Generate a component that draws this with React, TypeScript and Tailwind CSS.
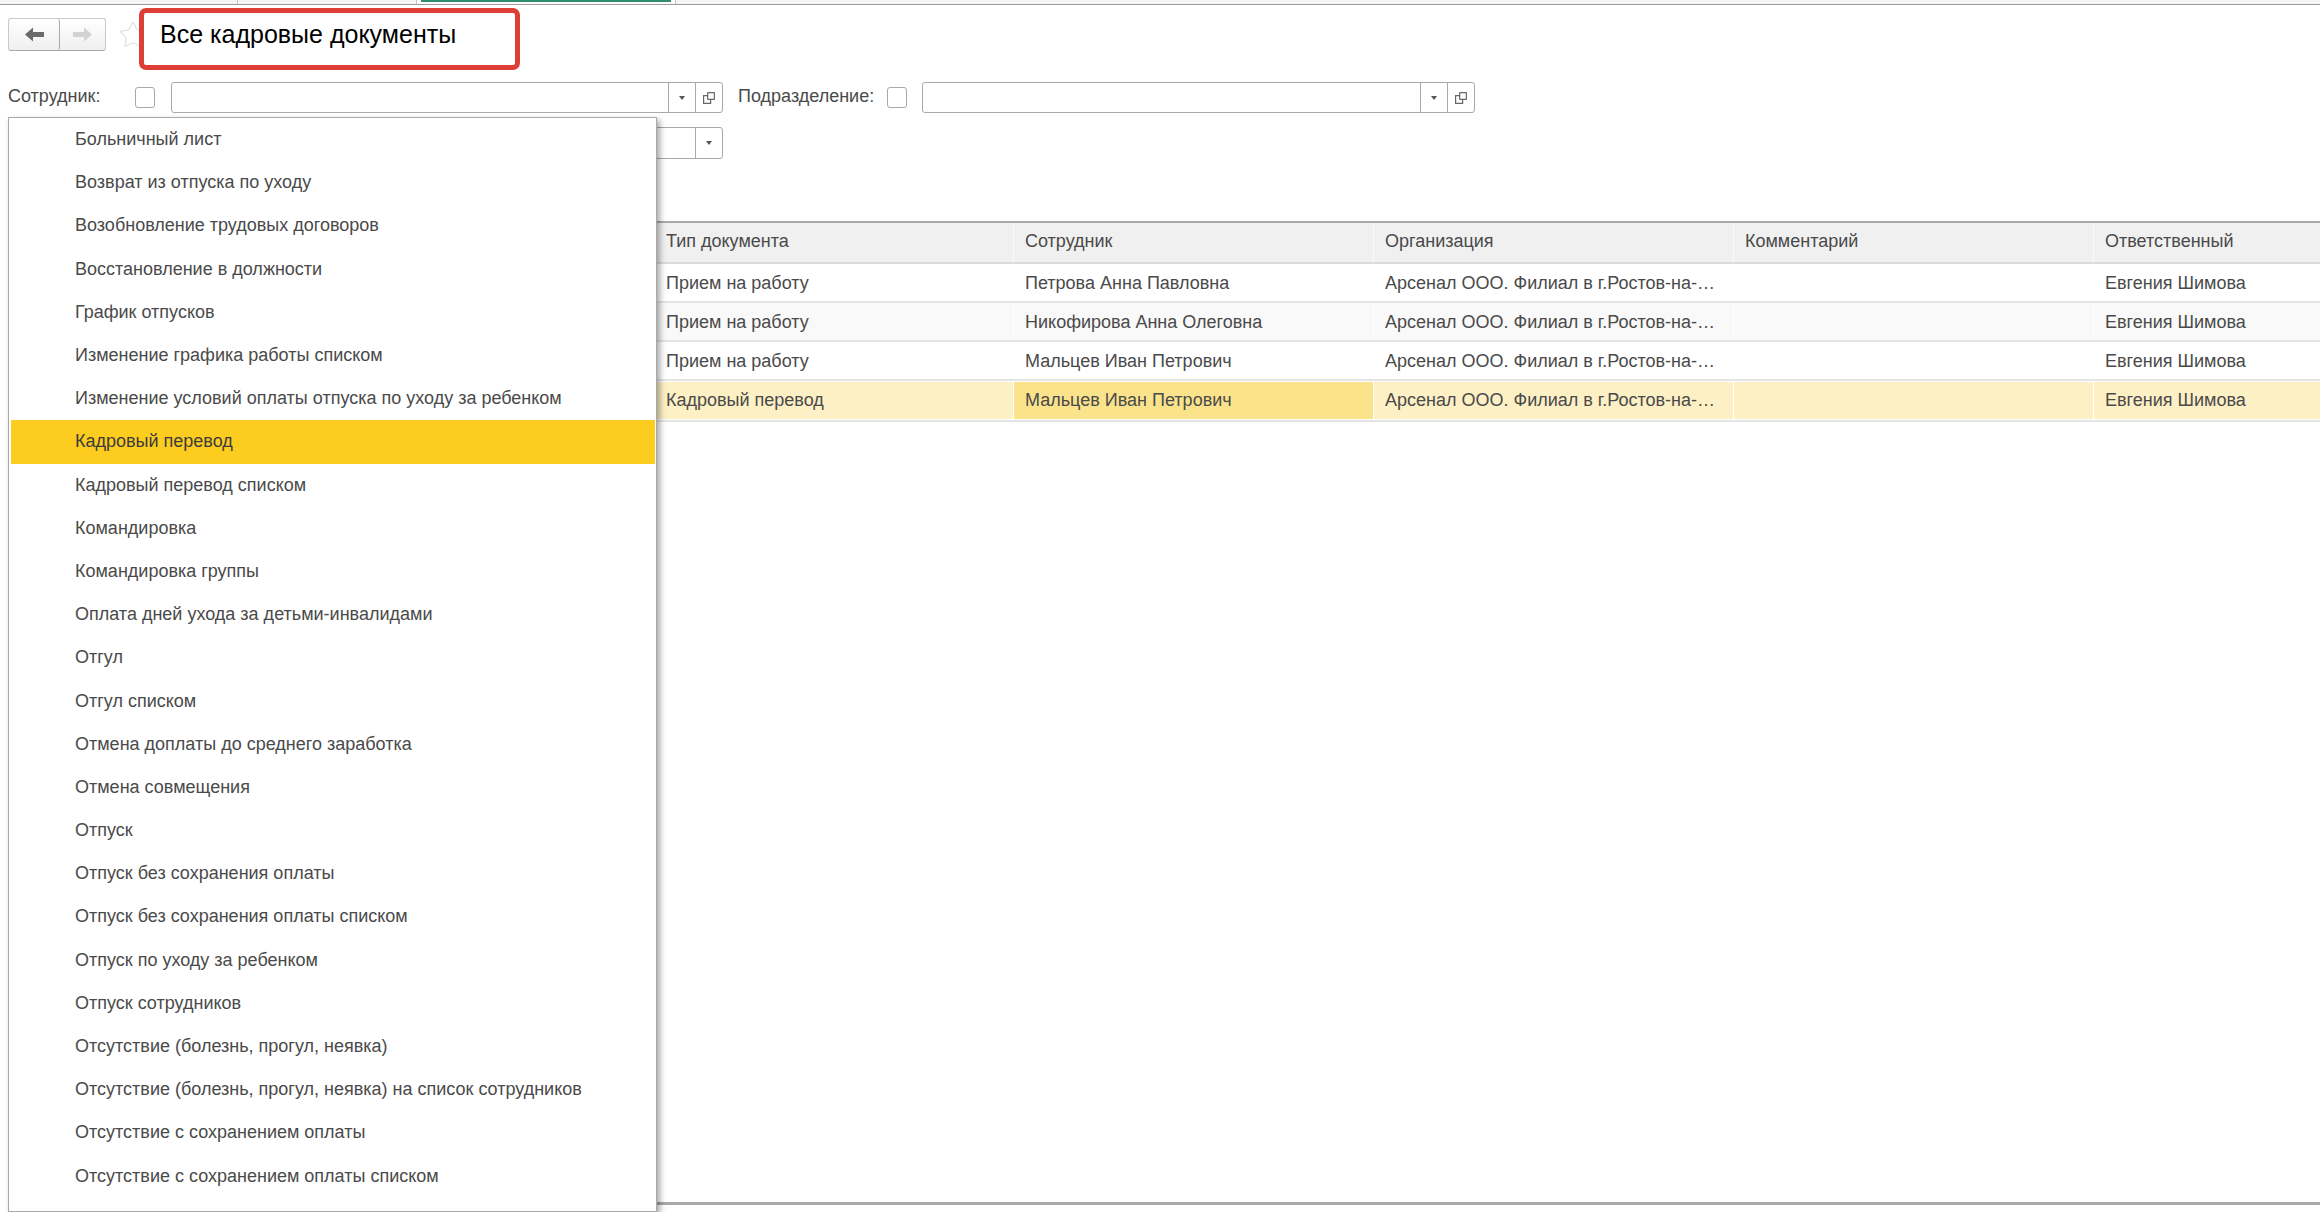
import React from "react";
import { Star } from "lucide-react";

const menuItems = [
  "Больничный лист",
  "Возврат из отпуска по уходу",
  "Возобновление трудовых договоров",
  "Восстановление в должности",
  "График отпусков",
  "Изменение графика работы списком",
  "Изменение условий оплаты отпуска по уходу за ребенком",
  "Кадровый перевод",
  "Кадровый перевод списком",
  "Командировка",
  "Командировка группы",
  "Оплата дней ухода за детьми-инвалидами",
  "Отгул",
  "Отгул списком",
  "Отмена доплаты до среднего заработка",
  "Отмена совмещения",
  "Отпуск",
  "Отпуск без сохранения оплаты",
  "Отпуск без сохранения оплаты списком",
  "Отпуск по уходу за ребенком",
  "Отпуск сотрудников",
  "Отсутствие (болезнь, прогул, неявка)",
  "Отсутствие (болезнь, прогул, неявка) на список сотрудников",
  "Отсутствие с сохранением оплаты",
  "Отсутствие с сохранением оплаты списком",
];

const org = "Арсенал ООО. Филиал в г.Ростов-на-Дону";
const person = "Евгения Шимова";

const rows = [
  { type: "Прием на работу", employee: "Петрова Анна Павловна" },
  { type: "Прием на работу", employee: "Никофирова Анна Олеговна" },
  { type: "Прием на работу", employee: "Мальцев Иван Петрович" },
  { type: "Кадровый перевод", employee: "Мальцев Иван Петрович" },
];

const gridCols = "grid grid-cols-[646px_359px_360px_360px_360px_1fr]";

const Arrow = ({ flip, color }: { flip?: boolean; color: string }) => (
  <svg width="19" height="15" viewBox="0 0 19 15" className={flip ? "-scale-x-100" : ""}>
    <path d="M0 7.5 L8 0.5 V5 H19 V10 H8 V14.5 Z" fill={color} />
  </svg>
);

const Caret = () => (
  <svg width="6" height="4" viewBox="0 0 6 4">
    <path d="M0 0 H6 L3 4 Z" fill="#555555" />
  </svg>
);

const OpenIcon = () => (
  <svg width="12" height="12" viewBox="0 0 12 12" fill="none" stroke="#666666" strokeWidth="1.2">
    <rect x="4.6" y="0.6" width="6.8" height="6.8" rx="0.5" />
    <path d="M4.6 3.6 H0.6 V11.4 H7.6 V7.4" />
  </svg>
);

const Field = ({ className, open }: { className: string; open?: boolean }) => (
  <div className={`flex rounded-[3px] border border-[#a9a9a9] bg-white ${className}`}>
    <div className="flex-1" />
    <div className="flex w-[27px] items-center justify-center border-l border-[#a9a9a9]">
      <Caret />
    </div>
    {open && (
      <div className="flex w-[27px] items-center justify-center border-l border-[#a9a9a9]">
        <OpenIcon />
      </div>
    )}
  </div>
);

const Checkbox = () => (
  <div className="h-[21px] w-[20px] shrink-0 rounded-[3px] border border-[#a9a9a9] bg-white" />
);

const TabStrip = () => (
  <div className="flex h-[5px] border-b border-[#9a9a9a] bg-[#f4f4f4]">
    <div className="w-[238px] border-r border-[#c4c4c4]" />
    <div className="w-[179px] border-r border-[#c4c4c4]" />
    <div className="w-[259px] border-r border-[#c4c4c4] bg-white pl-[4px]">
      <div className="h-[2px] w-[250px] bg-[#2f8f6b]" />
    </div>
  </div>
);

const Header = () => (
  <div className="flex h-[77px] pl-[8px]">
    <div className="mt-[13px] flex h-[33px] w-[98px] rounded-[3px] border border-[#c9c9c9] border-b-[#a9a9a9] bg-gradient-to-b from-white to-[#efefef]">
      <div className="flex w-[51px] items-center justify-center rounded-[3px] border-r border-[#a9a9a9]">
        <Arrow color="#6a6a6a" />
      </div>
      <div className="flex flex-1 items-center justify-center">
        <Arrow flip color="#d2d2d2" />
      </div>
    </div>
    <Star size={30} strokeWidth={1} className="mt-[15px] ml-[12px] text-[#e2e2e2]" />
    <div className="relative mt-[3px] -ml-[9px] h-[62px] w-[381px] rounded-[7px] border-[5px] border-[#dd3f36] bg-white pl-[16px] text-[25px] leading-[43px] text-black">
      Все кадровые документы
    </div>
  </div>
);

const Filters = () => (
  <div className="h-[139px] pl-[8px] text-[18px] text-[#4a4a4a]">
    <div className="flex h-[31px] items-center">
      <span className="w-[127px] -translate-y-[1px]">Сотрудник:</span>
      <Checkbox />
      <Field open className="ml-[16px] h-full w-[552px]" />
      <span className="ml-[15px] w-[149px] -translate-y-[1px]">Подразделение:</span>
      <Checkbox />
      <Field open className="ml-[15px] h-full w-[553px]" />
    </div>
    <Field className="mt-[14px] ml-[163px] h-[32px] w-[552px]" />
  </div>
);

const DocTable = () => (
  <div className="ml-[8px] flex h-[984px] flex-col border-t-2 border-b-[3px] border-[#a9a9a9] text-[18px] text-[#4a4a4a]">
    <div className={`${gridCols} h-[41px] border-b-2 border-[#dcdcdc] bg-[#f0f0f0]`}>
      {["", "Тип документа", "Сотрудник", "Организация", "Комментарий", "Ответственный"].map((title, i) => (
        <div
          key={i}
          className={`flex items-center pb-[2px] ${i === 1 ? "pl-[12px]" : "border-l border-[#fafafa] pl-[11px]"}`}
        >
          {title}
        </div>
      ))}
    </div>
    {rows.map((row, i) => {
      const selected = i === 3;
      return (
        <div
          key={i}
          className={`${gridCols} border-b-2 border-[#e4e4e4] ${
            selected ? "h-[41px] pt-[1px] pb-[1px]" : "h-[39px] pt-[1px]"
          } ${i === 1 ? "bg-[#f9f9f9]" : "bg-white"}`}
        >
          <div />
          <div className={`flex items-center pl-[12px] ${selected ? "bg-[#fdf0c5]" : ""}`}>{row.type}</div>
          <div className={`flex items-center border-l border-white pl-[11px] ${selected ? "bg-[#fbe38b]" : ""}`}>
            {row.employee}
          </div>
          <div className={`flex min-w-0 items-center border-l border-white pr-[11px] pl-[11px] ${selected ? "bg-[#fdf0c5]" : ""}`}>
            <span className="truncate">{org}</span>
          </div>
          <div className={`border-l border-white ${selected ? "bg-[#fdf0c5]" : ""}`} />
          <div className={`flex items-center border-l border-white pl-[11px] ${selected ? "bg-[#fdf0c5]" : ""}`}>
            {person}
          </div>
        </div>
      );
    })}
  </div>
);

const TypeMenu = () => (
  <div className="absolute top-[117px] bottom-0 left-[8px] w-[649px] overflow-hidden border border-[#a9a9a9] bg-white pr-[1px] pl-[2px] text-[18px] text-[#4a4a4a] shadow-[3px_3px_6px_rgba(0,0,0,0.35)]">
    {menuItems.map((item, i) => (
      <div
        key={item}
        className={`flex h-[43.2px] items-center pl-[64px] ${i === 7 ? "bg-[#fccd1f] text-[#3c3c3c]" : ""}`}
      >
        {item}
      </div>
    ))}
  </div>
);

export default function App() {
  return (
    <div className="relative h-[1212px] w-[2320px] overflow-hidden bg-white font-['Liberation_Sans',Arial,sans-serif]">
      <TabStrip />
      <Header />
      <Filters />
      <DocTable />
      <TypeMenu />
    </div>
  );
}
